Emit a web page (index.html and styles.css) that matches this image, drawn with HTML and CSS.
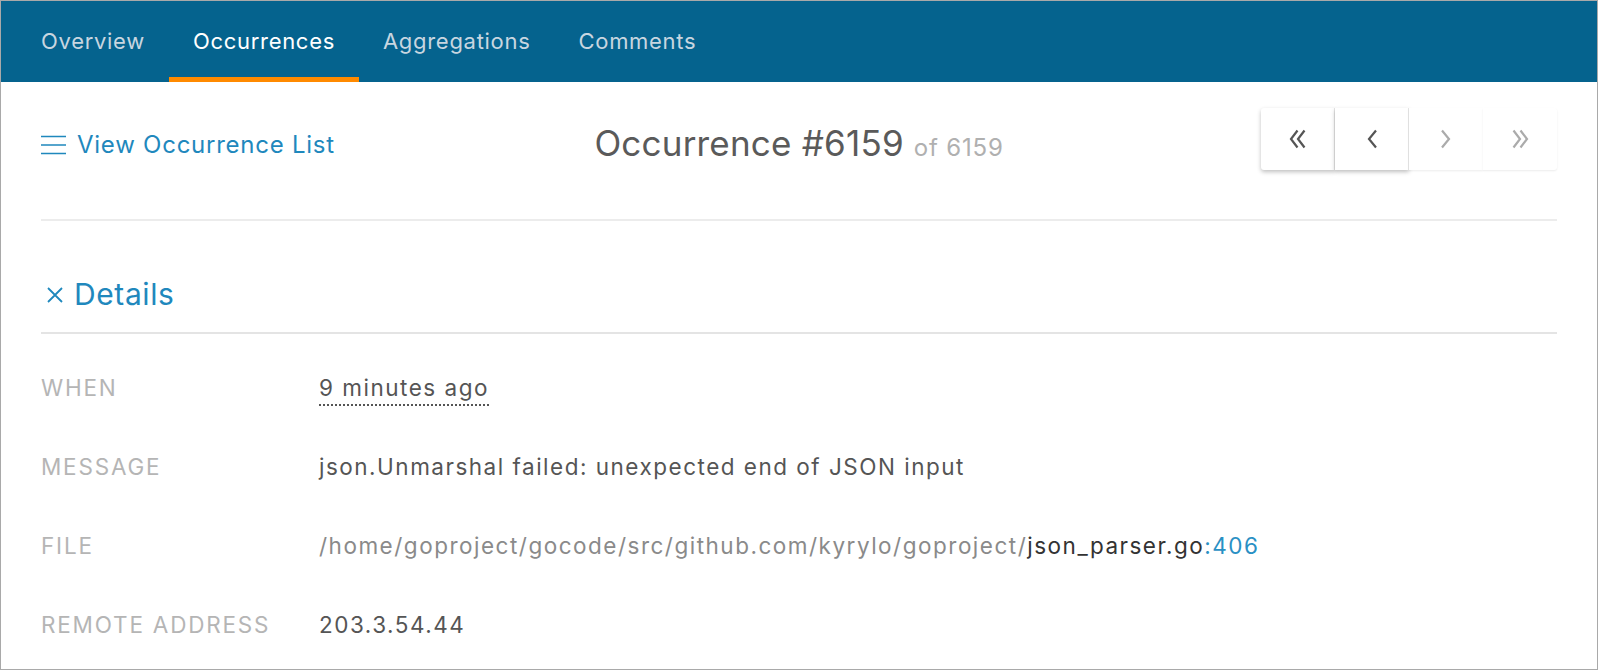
FILE: index.html
```html
<!DOCTYPE html>
<html>
<head>
<meta charset="utf-8">
<link rel="stylesheet" href="styles.css">
</head>
<body>
<div class="frame">
  <nav class="tabs">
    <a class="tab">Overview</a>
    <a class="tab active">Occurrences</a>
    <a class="tab">Aggregations</a>
    <a class="tab">Comments</a>
  </nav>
  <main class="content">
    <div class="toolbar">
      <a class="list-link">
        <svg class="burger" width="25" height="20" viewBox="0 0 25 20"><path d="M0 1.5H25M0 10H25M0 18.5H25" stroke="#1f88bd" stroke-width="1.7"/></svg>
        <span>View Occurrence List</span>
      </a>
      <h1 class="title">Occurrence #6159 <span class="of">of 6159</span></h1>
      <div class="pager">
        <button class="pg on"><svg width="20" height="20" viewBox="0 0 20 20"><path d="M9.5 1.5L3 10l6.5 8.5M16.5 1.5L10 10l6.5 8.5" fill="none" stroke="#555" stroke-width="2.2"/></svg></button>
        <button class="pg on"><svg width="14" height="20" viewBox="0 0 14 20"><path d="M11 1.5L4 10l7 8.5" fill="none" stroke="#555" stroke-width="2.2"/></svg></button>
        <button class="pg off"><svg width="14" height="20" viewBox="0 0 14 20"><path d="M3 1.5l7 8.5-7 8.5" fill="none" stroke="#ababab" stroke-width="2.2"/></svg></button>
        <button class="pg off"><svg width="20" height="20" viewBox="0 0 20 20"><path d="M3.5 1.5L10 10l-6.5 8.5M10.5 1.5L17 10l-6.5 8.5" fill="none" stroke="#ababab" stroke-width="2.2"/></svg></button>
      </div>
    </div>
    <section class="details">
      <h2 class="details-title"><svg class="x" width="16" height="16" viewBox="0 0 16 16"><path d="M1 1L15 15M15 1L1 15" stroke="#1f88bd" stroke-width="1.8"/></svg>Details</h2>
      <dl class="rows">
        <div class="row"><dt>WHEN</dt><dd><span class="dotted">9 minutes ago</span></dd></div>
        <div class="row"><dt>MESSAGE</dt><dd>json.Unmarshal failed: unexpected end of JSON input</dd></div>
        <div class="row"><dt>FILE</dt><dd><span class="path">/home/goproject/gocode/src/github.com/kyrylo/goproject/</span><span class="fname">json_parser.go</span><span class="line">:406</span></dd></div>
        <div class="row"><dt>REMOTE ADDRESS</dt><dd>203.3.54.44</dd></div>
      </dl>
    </section>
  </main>
</div>
</body>
</html>
```
FILE: styles.css
```css
* { box-sizing: border-box; }
html, body { margin: 0; padding: 0; background: #fff; }
body { font-family: Inter, "Noto Sans", sans-serif; color: #555; }
.frame {
  width: 1598px;
  height: 670px;
  border: 1px solid #a9a9a9;
  overflow: hidden;
}
.tabs {
  display: flex;
  height: 81px;
  background: #05638e;
  padding-left: 16px;
}
.tab {
  display: flex;
  align-items: center;
  padding: 8px 24px 5px;
  font-size: 22px;
  letter-spacing: 0.7px;
  color: #c8d6e0;
  border-bottom: 5px solid transparent;
}
.tab.active { color: #fff; border-bottom-color: #ff8a00; }
.content { padding: 0 40px; }
.toolbar {
  display: grid;
  grid-template-columns: 1fr auto 1fr;
  align-items: center;
  height: 139px;
  border-bottom: 2px solid #ececec;
}
.list-link {
  display: flex;
  align-items: center;
  gap: 11px;
  color: #1f88bd;
  font-size: 24px;
  letter-spacing: 0.75px;
  padding-bottom: 12px;
}
.burger { flex: none; }
.title {
  margin: 0;
  font-weight: 400;
  font-size: 35px;
  letter-spacing: 0.2px;
  color: #5a5a5a;
  padding-bottom: 16px;
}
.of { font-size: 24px; letter-spacing: 0.8px; color: #b0b0b0; }
.pager {
  justify-self: end;
  display: flex;
  padding-bottom: 24px;
}
.pg {
  width: 74px;
  height: 62px;
  border: 0;
  background: #fff;
  display: flex;
  align-items: center;
  justify-content: center;
  padding: 0;
}
.pg.on { box-shadow: 0 2px 4px rgba(0,0,0,.25); border-right: 1px solid #e6e6e6; }
.pg.on:first-child { border-radius: 3px 0 0 3px; }
.pg.off { box-shadow: 0 1px 2px rgba(0,0,0,.08); }
.pg.off:last-child { border-radius: 0 3px 3px 0; }
.details-title {
  margin: 0;
  height: 113px;
  display: flex;
  align-items: center;
  padding-top: 35px;
  font-weight: 400;
  font-size: 30px;
  letter-spacing: 0.6px;
  color: #1f88bd;
  border-bottom: 2px solid #e4e4e4;
}
.x { margin: 2px 11px 0 6px; flex: none; }
.rows { margin: 0; padding-top: 14px; }
.row {
  display: flex;
  align-items: center;
  height: 79px;
  font-size: 22.5px;
  letter-spacing: 1.5px;
}
.row dt { width: 278px; color: #b5b5b5; letter-spacing: 1.8px; }
.row dd { margin: 0; color: #555; }
.dotted { border-bottom: 2px dotted #555; padding-bottom: 3px; }
.path { color: #8a8a8a; }
.fname { color: #333; }
.line { color: #2a90c4; }
```
